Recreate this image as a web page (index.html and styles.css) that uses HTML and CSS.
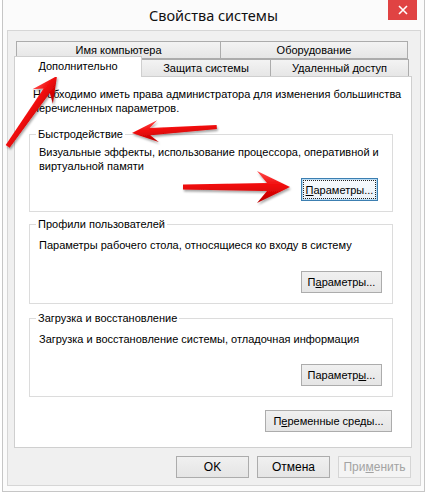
FILE: index.html
```html
<!DOCTYPE html>
<html lang="ru">
<head>
<meta charset="utf-8">
<title>Свойства системы</title>
<link rel="stylesheet" href="styles.css">
</head>
<body>
<div class="window">
  <div class="titlebar">
    <div class="title">Свойства системы</div>
    <button class="close" aria-label="Закрыть"><svg width="10" height="10" viewBox="0 0 10 10"><path d="M1 1 L9 9 M9 1 L1 9" stroke="#fff" stroke-width="1.6"/></svg></button>
  </div>
  <div class="client">
    <div class="tabs">
      <div class="tabrow back">
        <div class="tab tab-name">Имя компьютера</div>
        <div class="tab tab-hw">Оборудование</div>
      </div>
      <div class="tabrow front">
        <div class="tab tab-adv selected">Дополнительно</div>
        <div class="tab tab-prot">Защита системы</div>
        <div class="tab tab-remote">Удаленный доступ</div>
      </div>
      <div class="pane">
        <p class="intro">Необходимо иметь права администратора для изменения большинства<br>перечисленных параметров.</p>
        <fieldset class="group group-perf">
          <legend>Быстродействие</legend>
          <p class="desc">Визуальные эффекты, использование процессора, оперативной и<br>виртуальной памяти</p>
          <div class="actions"><button class="btn btn-params focused"><span class="focus-ring"><u>П</u>араметры...</span></button></div>
        </fieldset>
        <fieldset class="group group-profiles">
          <legend>Профили пользователей</legend>
          <p class="desc">Параметры рабочего стола, относящиеся ко входу в систему</p>
          <div class="actions"><button class="btn btn-params">П<u>а</u>раметры...</button></div>
        </fieldset>
        <fieldset class="group group-boot">
          <legend>Загрузка и восстановление</legend>
          <p class="desc">Загрузка и восстановление системы, отладочная информация</p>
          <div class="actions"><button class="btn btn-params">Параметр<u>ы</u>...</button></div>
        </fieldset>
        <div class="env-row"><button class="btn btn-env">П<u>е</u>ременные среды...</button></div>
      </div>
    </div>
    <div class="footer">
      <button class="btn btn-dlg">OK</button>
      <button class="btn btn-dlg">Отмена</button>
      <button class="btn btn-dlg disabled" disabled>При<u>м</u>енить</button>
    </div>
  </div>
</div>
<svg class="arrows" width="426" height="493" viewBox="0 0 426 493">
  <defs>
    <linearGradient id="red" x1="0" y1="0" x2="0" y2="1">
      <stop offset="0" stop-color="#ff4a4a"/>
      <stop offset="0.45" stop-color="#f00a0a"/>
      <stop offset="1" stop-color="#b80000"/>
    </linearGradient>
    <filter id="shadow" x="-20%" y="-50%" width="140%" height="200%">
      <feDropShadow dx="1" dy="2" stdDeviation="1.3" flood-color="#000" flood-opacity="0.35"/>
    </filter>
  </defs>
  <g filter="url(#shadow)">
    <polygon transform="translate(57,76) rotate(-55)" fill="url(#red)" points="-86,-2.4 -18,-3.8 -25,-12.5 0,0 -25,12.5 -18,3.8 -86,2.4"/>
    <polygon transform="translate(132,133) rotate(-4.1) scale(-1,1)" fill="url(#red)" points="-85,-2 -18,-3.6 -26,-11 0,0 -26,11 -18,3.6 -85,2"/>
    <polygon transform="translate(290,187)" fill="url(#red)" points="-107,-2.5 -23,-4 -33,-16 0,0 -33,16 -23,4 -107,2.5"/>
  </g>
</svg>
</body>
</html>
```

FILE: styles.css
```css
* { box-sizing: border-box; }
html, body { margin: 0; padding: 0; }
body {
  width: 426px;
  height: 493px;
  background: #fff;
  font-family: "Liberation Sans", Arial, sans-serif;
  font-size: 11px;
  color: #000;
  overflow: hidden;
  position: relative;
}
.window {
  margin-left: 2px;
  width: 423px;
  height: 492px;
  border: 1px solid #c6c6c6;
  border-top: none;
  background: #fbfbfb;
  display: flex;
  flex-direction: column;
}
.titlebar {
  height: 30px;
  display: grid;
  grid-template-columns: 1fr auto 1fr;
}
.title {
  grid-column: 2;
  font-family: "Noto Sans", sans-serif;
  font-size: 14.5px;
  line-height: 31px;
  color: #111;
}
.close {
  grid-column: 3;
  justify-self: end;
  align-self: start;
  width: 29px;
  height: 20px;
  margin-right: 7px;
  border: none;
  padding: 0;
  background: #e04343;
  display: flex;
  align-items: center;
  justify-content: center;
}
.client {
  margin: 0 3px 0 4px;
  height: 456px;
  border: 1px solid #d6d6d6;
  background: #f0f0f0;
  padding: 10px 8px 0 6px;
}
.tabs {
  width: 398px;
  display: flex;
  flex-direction: column;
}
.tabrow { display: flex; }
.tabrow.back {
  height: 18px;
  padding-left: 2px;
}
.tabrow.front {
  height: 20px;
  margin-top: -3px;
  align-items: flex-end;
  position: relative;
  z-index: 1;
}
.tab {
  border: 1px solid #acacac;
  background: linear-gradient(#f3f3f3, #e6e6e6);
  text-align: center;
  white-space: nowrap;
}
.back .tab { height: 18px; line-height: 16px; }
.tab-name { width: 205px; }
.tab-hw { width: 188px; margin-left: -1px; }
.front .tab { height: 17px; line-height: 17px; border-bottom: none; }
.front .tab.selected {
  width: 128px;
  height: 21px;
  line-height: 18px;
  margin-bottom: -1px;
  background: #fff;
  border-color: #cfcfcf;
  position: relative;
  z-index: 2;
}
.tab-prot { width: 130px; margin-left: -1px; }
.tab-remote { width: 139px; margin-left: -1px; }
.pane {
  height: 372px;
  border: 1px solid #cfcfcf;
  background: #fff;
  padding: 10px 18px 0 14px;
}
.intro {
  margin: 0 0 0 4px;
  line-height: 14px;
  white-space: nowrap;
}
.group {
  margin: 0;
  border: 1px solid #dcdcdc;
  padding: 7px 10px 10px 9px;
  min-inline-size: 0;
}
.group legend {
  margin-left: -3px;
  padding: 0 2px;
  line-height: 14px;
}
.group-perf { margin-top: 12px; padding-top: 4px; padding-right: 14px; }
.group-profiles { margin-top: 5px; }
.group-boot { margin-top: 7px; }
.desc {
  margin: 0;
  line-height: 14px;
  white-space: nowrap;
}
.actions {
  display: flex;
  justify-content: flex-end;
}
.group-perf .actions { margin-top: 5px; }
.group-profiles .actions { margin-top: 19px; }
.group-boot .actions { margin-top: 18px; }
.btn {
  height: 22px;
  padding: 0;
  border: 1px solid #acacac;
  background: linear-gradient(#f0f0f0, #e5e5e5);
  font-family: inherit;
  font-size: 11px;
  color: #000;
  display: flex;
  align-items: center;
  justify-content: center;
}
.btn u { text-underline-offset: 1px; }
.btn-params { width: 81px; }
.btn.focused {
  width: 77px;
  height: 23px;
  border-color: #3c7fb1;
  box-shadow: inset 0 0 0 1px #b9dcf5;
  background: linear-gradient(#f7fafd, #ebf2f9);
}
.focus-ring {
  display: flex;
  align-items: center;
  justify-content: center;
  width: 71px;
  height: 17px;
  outline: 1px dotted #222;
}
.env-row {
  display: flex;
  justify-content: flex-end;
  margin-top: 13px;
  padding-right: 1px;
}
.btn-env { width: 127px; }
.footer {
  display: flex;
  justify-content: flex-end;
  gap: 8px;
  margin-top: 8px;
  padding-right: 1px;
}
.btn-dlg { width: 73px; font-size: 12px; }
.btn.disabled {
  color: #a3a3a3;
  border-color: #d5d5d5;
  background: #f4f4f4;
}
.arrows {
  position: absolute;
  left: 0;
  top: 0;
  pointer-events: none;
}
```
